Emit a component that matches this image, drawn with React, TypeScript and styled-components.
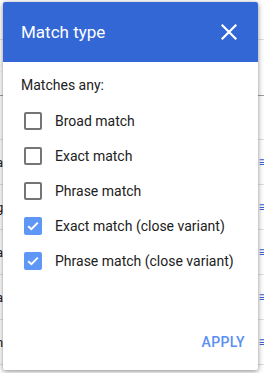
import { useState } from "react";
import styled, { createGlobalStyle } from "styled-components";

const GlobalStyle = createGlobalStyle`
  html, body {
    margin: 0;
    padding: 0;
    background: #ffffff;
    font-family: Roboto, "Liberation Sans", sans-serif;
  }
`;

type Row = { h: number; left: string; icon: boolean; dark?: boolean };

const rows: Row[] = [
  { h: 40, left: "", icon: false },
  { h: 56, left: "t", icon: false, dark: true },
  { h: 44, left: "", icon: false },
  { h: 45, left: "a", icon: true },
  { h: 45, left: "g", icon: true },
  { h: 45, left: "a", icon: true },
  { h: 45, left: "a", icon: true },
  { h: 45, left: "n", icon: true },
];

const options = [
  { label: "Broad match", checked: false },
  { label: "Exact match", checked: false },
  { label: "Phrase match", checked: false },
  { label: "Exact match (close variant)", checked: true },
  { label: "Phrase match (close variant)", checked: true },
];

export default function App() {
  const [values, setValues] = useState(options.map((o) => o.checked));

  return (
    <Page>
      <GlobalStyle />
      <Table>
        {rows.map((r, i) => (
          <TableRow key={i} $h={r.h} $dark={r.dark}>
            <LeftCell>{r.left}</LeftCell>
            {r.icon && <RowIcon>≡</RowIcon>}
          </TableRow>
        ))}
      </Table>
      <Dialog>
        <Header>
          <Title>Match type</Title>
          <CloseButton aria-label="close">
            <svg width="16" height="16" viewBox="0 0 16 16">
              <path
                d="M1.5 1.5 L14.5 14.5 M14.5 1.5 L1.5 14.5"
                stroke="#ffffff"
                strokeWidth="2.2"
                strokeLinecap="square"
              />
            </svg>
          </CloseButton>
        </Header>
        <Body>
          <Subtitle>Matches any:</Subtitle>
          <OptionList>
            {options.map((o, i) => (
              <Option
                key={o.label}
                onClick={() =>
                  setValues((prev) => prev.map((v, j) => (j === i ? !v : v)))
                }
              >
                <Box $checked={values[i]}>
                  {values[i] && (
                    <svg width="14" height="14" viewBox="0 0 14 14">
                      <path
                        d="M2.2 7.2 L5.4 10.2 L11.8 3.6"
                        fill="none"
                        stroke="#ffffff"
                        strokeWidth="2"
                      />
                    </svg>
                  )}
                </Box>
                <OptionLabel>{o.label}</OptionLabel>
              </Option>
            ))}
          </OptionList>
        </Body>
        <Footer>
          <ApplyButton>APPLY</ApplyButton>
        </Footer>
      </Dialog>
    </Page>
  );
}

const Page = styled.div`
  position: relative;
  width: 264px;
  height: 373px;
  overflow: hidden;
  background: #ffffff;
`;

const Table = styled.div`
  display: flex;
  flex-direction: column;
`;

const TableRow = styled.div<{ $h: number; $dark?: boolean }>`
  height: ${(p) => p.$h}px;
  box-sizing: border-box;
  border-bottom: 1px solid ${(p) => (p.$dark ? "#9e9e9e" : "#e0e0e0")};
  display: flex;
  align-items: center;
  justify-content: space-between;
`;

const LeftCell = styled.span`
  font-size: 13px;
  color: #212121;
  margin-left: -4px;
`;

const RowIcon = styled.span`
  font-size: 14px;
  color: #3367d6;
  margin-right: -3px;
  font-weight: 700;
`;

const Dialog = styled.div`
  position: absolute;
  left: 3px;
  top: 2px;
  width: 255px;
  height: 368px;
  background: #ffffff;
  border-radius: 2px;
  box-shadow: 0 1px 4px rgba(0, 0, 0, 0.35), 0 2px 8px rgba(0, 0, 0, 0.15);
  display: flex;
  flex-direction: column;
  overflow: hidden;
`;

const Header = styled.div`
  height: 60px;
  background: #3367d6;
  display: flex;
  align-items: center;
  justify-content: space-between;
  padding: 0 21px 0 18px;
`;

const Title = styled.div`
  color: #ffffff;
  font-size: 17px;
  font-weight: 400;
`;

const CloseButton = styled.div`
  width: 16px;
  height: 16px;
  display: flex;
  cursor: pointer;
`;

const Body = styled.div`
  flex: 1;
  padding: 14px 18px 0 18px;
`;

const Subtitle = styled.div`
  font-size: 14px;
  color: #212121;
  height: 18px;
  line-height: 18px;
`;

const OptionList = styled.div`
  display: flex;
  flex-direction: column;
  gap: 17px;
  margin-top: 18px;
  padding-left: 3px;
`;

const Option = styled.div`
  display: flex;
  align-items: center;
  height: 18px;
  cursor: pointer;
`;

const Box = styled.div<{ $checked: boolean }>`
  width: 18px;
  height: 18px;
  box-sizing: border-box;
  border-radius: 2px;
  border: ${(p) => (p.$checked ? "none" : "2px solid #757575")};
  background: ${(p) => (p.$checked ? "#5e97f6" : "transparent")};
  display: flex;
  align-items: center;
  justify-content: center;
  flex-shrink: 0;
`;

const OptionLabel = styled.span`
  margin-left: 13px;
  font-size: 14px;
  color: #212121;
`;

const Footer = styled.div`
  display: flex;
  justify-content: flex-end;
  padding: 0 13px 20px 0;
`;

const ApplyButton = styled.div`
  color: #5a8df6;
  font-size: 14px;
  font-weight: 500;
  letter-spacing: 0.4px;
  cursor: pointer;
`;
